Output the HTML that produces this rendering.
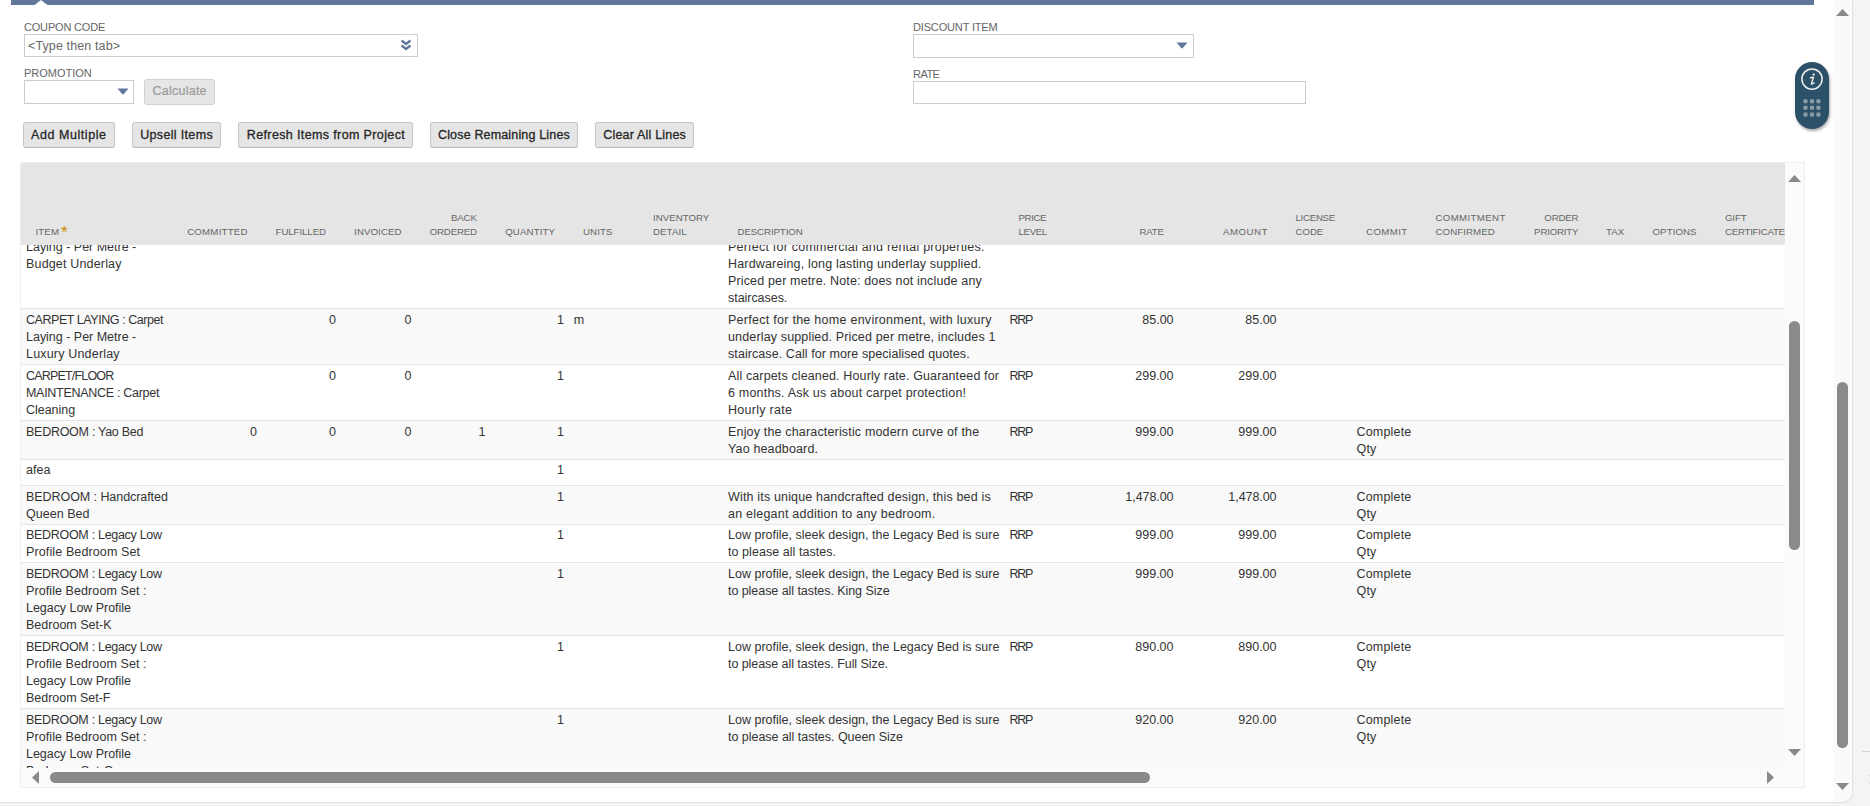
<!DOCTYPE html>
<html><head><meta charset='utf-8'><title>Items</title><style>
html,body{margin:0;padding:0}
body{width:1870px;height:806px;overflow:hidden;position:relative;background:#f4f4f4;font-family:"Liberation Sans",sans-serif}
.a{position:absolute}
.t{position:absolute;white-space:pre;font-size:12.5px;line-height:17px;color:#333}
</style></head><body>
<div class='a' style='left:-12px;top:-20px;width:1864px;height:822px;background:#fff;border-radius:0 0 10px 10px;box-shadow:0 0 0 1px #e2e2e2, 1px 1px 2px rgba(0,0,0,.06);'></div>
<div class='a' style='left:1862px;top:751px;width:8px;height:1px;background:#d4d4d4;'></div>
<div class='a' style='left:1869px;top:775px;width:1px;height:2px;background:#e2e2e2;'></div>
<div class='a' style='left:1869px;top:782px;width:1px;height:2px;background:#e2e2e2;'></div>
<div class='a' style='left:1833px;top:0px;width:19px;height:802px;background:#fafafa;border-bottom-right-radius:10px;'></div>
<svg class='a' style='left:1836px;top:9px' width='13' height='7'><polygon points='0,7 6.5,0 13,7' fill='#8a8a8a'/></svg>
<div class='a' style='left:1837px;top:382px;width:11px;height:366px;background:#8a8a8a;border-radius:5.5px;'></div>
<svg class='a' style='left:1836px;top:783px' width='13' height='7'><polygon points='0,0 13,0 6.5,7' fill='#8a8a8a'/></svg>
<svg class='a' style='left:11px;top:0' width='1803' height='5'><polygon points='0,0 1803,0 1803,5 36.5,5 30,0 23.5,5 0,5' fill='#607799'/></svg>
<div class='t' style='left:24px;top:20px;font-size:11px;line-height:14px;color:#666666;letter-spacing:-0.188px'>COUPON CODE</div>
<div class='a' style='left:24px;top:34px;width:394px;height:23px;border:1px solid #cccccc;box-sizing:border-box;background:#fff;'></div>
<div class='t' style='left:28px;top:38px;color:#666666;letter-spacing:0.12px'>&lt;Type then tab&gt;</div>
<svg class='a' style='left:400px;top:39px' width='12' height='13'><path d='M1.5 1.5 L6 5 L10.5 1.5' stroke='#607799' stroke-width='2.4' fill='none'/><path d='M1.5 6.5 L6 10 L10.5 6.5' stroke='#607799' stroke-width='2.4' fill='none'/></svg>
<div class='t' style='left:24px;top:66px;font-size:11px;line-height:14px;color:#666666;letter-spacing:-0.017px'>PROMOTION</div>
<div class='a' style='left:24px;top:80px;width:110px;height:24px;border:1px solid #cccccc;box-sizing:border-box;background:#fff;'></div>
<svg class='a' style='left:117px;top:88px' width='12' height='7'><path d='M0.5 0.5 L11.5 0.5 L6.8 6 Q6 6.8 5.2 6 Z' fill='#607799'/></svg>
<div class='a' style='left:144px;top:79px;width:71px;height:26px;border:1px solid #d0d0d0;box-sizing:border-box;background:#e6e6e6;border-radius:3px;'></div>
<div class='t' style='left:152.5px;top:83px;line-height:16px;color:#999999;letter-spacing:0.242px;-webkit-text-stroke:0.2px #9d9d9d'>Calculate</div>
<div class='t' style='left:913px;top:20px;font-size:11px;line-height:14px;color:#666666;letter-spacing:-0.156px'>DISCOUNT ITEM</div>
<div class='a' style='left:913px;top:34px;width:281px;height:24px;border:1px solid #cccccc;box-sizing:border-box;background:#fff;'></div>
<svg class='a' style='left:1176px;top:42px' width='12' height='7'><path d='M0.5 0.5 L11.5 0.5 L6.8 6 Q6 6.8 5.2 6 Z' fill='#607799'/></svg>
<div class='t' style='left:913px;top:67px;font-size:11px;line-height:14px;color:#666666;letter-spacing:-0.528px'>RATE</div>
<div class='a' style='left:913px;top:81px;width:393px;height:23px;border:1px solid #cccccc;box-sizing:border-box;background:#fff;'></div>
<div class='a' style='left:23px;top:122px;width:92px;height:26px;border:1px solid #c4c4c4;border-bottom-color:#b8b8b8;box-sizing:border-box;background:#e5e5e5;border-radius:3px;'></div>
<div class='t' style='left:31.0px;top:127px;line-height:16px;color:#262626;letter-spacing:0.567px;-webkit-text-stroke:0.3px #262626'>Add Multiple</div>
<div class='a' style='left:132px;top:122px;width:89px;height:26px;border:1px solid #c4c4c4;border-bottom-color:#b8b8b8;box-sizing:border-box;background:#e5e5e5;border-radius:3px;'></div>
<div class='t' style='left:140.2px;top:127px;line-height:16px;color:#262626;letter-spacing:0.335px;-webkit-text-stroke:0.3px #262626'>Upsell Items</div>
<div class='a' style='left:238px;top:122px;width:175px;height:26px;border:1px solid #c4c4c4;border-bottom-color:#b8b8b8;box-sizing:border-box;background:#e5e5e5;border-radius:3px;'></div>
<div class='t' style='left:246.8px;top:127px;line-height:16px;color:#262626;letter-spacing:0.371px;-webkit-text-stroke:0.3px #262626'>Refresh Items from Project</div>
<div class='a' style='left:430px;top:122px;width:148px;height:26px;border:1px solid #c4c4c4;border-bottom-color:#b8b8b8;box-sizing:border-box;background:#e5e5e5;border-radius:3px;'></div>
<div class='t' style='left:438.0px;top:127px;line-height:16px;color:#262626;letter-spacing:0.16px;-webkit-text-stroke:0.3px #262626'>Close Remaining Lines</div>
<div class='a' style='left:595px;top:122px;width:99px;height:26px;border:1px solid #c4c4c4;border-bottom-color:#b8b8b8;box-sizing:border-box;background:#e5e5e5;border-radius:3px;'></div>
<div class='t' style='left:603.3px;top:127px;line-height:16px;color:#262626;letter-spacing:0.186px;-webkit-text-stroke:0.3px #262626'>Clear All Lines</div>
<div class='a' style='left:20px;top:162px;width:1785px;height:626px;border:1px solid #eceef1;box-sizing:border-box;background:#fbfbfb;'></div>
<div class='a' style='left:21px;top:163px;width:1764px;height:82px;background:#e5e5e5;'></div>
<div class='t' style='left:35.5px;top:225px;font-size:9.7px;line-height:14px;color:#666666;letter-spacing:0.11px'>ITEM</div>
<div class='t' style='left:61px;top:223.5px;font-size:17px;line-height:17px;color:#c98c00;font-weight:normal'>*</div>
<div class='t' style='right:1622.29px;text-align:right;top:225px;font-size:9.7px;line-height:14px;color:#666666;letter-spacing:0.215px'>COMMITTED</div>
<div class='t' style='right:1544.09px;text-align:right;top:225px;font-size:9.7px;line-height:14px;color:#666666;letter-spacing:-0.086px'>FULFILLED</div>
<div class='t' style='right:1468.42px;text-align:right;top:225px;font-size:9.7px;line-height:14px;color:#666666;letter-spacing:0.08px'>INVOICED</div>
<div class='t' style='right:1393.1px;text-align:right;top:211px;font-size:9.7px;line-height:14px;color:#666666;letter-spacing:-0.095px'>BACK</div>
<div class='t' style='right:1393.17px;text-align:right;top:225px;font-size:9.7px;line-height:14px;color:#666666;letter-spacing:-0.175px'>ORDERED</div>
<div class='t' style='right:1314.88px;text-align:right;top:225px;font-size:9.7px;line-height:14px;color:#666666;letter-spacing:0.122px'>QUANTITY</div>
<div class='t' style='left:583px;top:225px;font-size:9.7px;line-height:14px;color:#666666;letter-spacing:0.082px'>UNITS</div>
<div class='t' style='left:653px;top:211px;font-size:9.7px;line-height:14px;color:#666666;letter-spacing:0.008px'>INVENTORY</div>
<div class='t' style='left:653px;top:225px;font-size:9.7px;line-height:14px;color:#666666;letter-spacing:0.075px'>DETAIL</div>
<div class='t' style='left:737.5px;top:225px;font-size:9.7px;line-height:14px;color:#666666;letter-spacing:-0.105px'>DESCRIPTION</div>
<div class='t' style='left:1018.5px;top:211px;font-size:9.7px;line-height:14px;color:#666666;letter-spacing:-0.389px'>PRICE</div>
<div class='t' style='left:1018.5px;top:225px;font-size:9.7px;line-height:14px;color:#666666;letter-spacing:-0.36px'>LEVEL</div>
<div class='t' style='right:706.21px;text-align:right;top:225px;font-size:9.7px;line-height:14px;color:#666666;letter-spacing:-0.207px'>RATE</div>
<div class='t' style='right:602.02px;text-align:right;top:225px;font-size:9.7px;line-height:14px;color:#666666;letter-spacing:0.484px'>AMOUNT</div>
<div class='t' style='left:1295.5px;top:211px;font-size:9.7px;line-height:14px;color:#666666;letter-spacing:-0.283px'>LICENSE</div>
<div class='t' style='left:1295.5px;top:225px;font-size:9.7px;line-height:14px;color:#666666;letter-spacing:-0.061px'>CODE</div>
<div class='t' style='left:1366px;top:225px;font-size:9.7px;line-height:14px;color:#666666;letter-spacing:0.399px'>COMMIT</div>
<div class='t' style='left:1435.5px;top:211px;font-size:9.7px;line-height:14px;color:#666666;letter-spacing:0.341px'>COMMITMENT</div>
<div class='t' style='left:1435.5px;top:225px;font-size:9.7px;line-height:14px;color:#666666;letter-spacing:0.078px'>CONFIRMED</div>
<div class='t' style='right:291.7px;text-align:right;top:211px;font-size:9.7px;line-height:14px;color:#666666;letter-spacing:-0.201px'>ORDER</div>
<div class='t' style='right:291.69px;text-align:right;top:225px;font-size:9.7px;line-height:14px;color:#666666;letter-spacing:-0.195px'>PRIORITY</div>
<div class='t' style='left:1606px;top:225px;font-size:9.7px;line-height:14px;color:#666666;letter-spacing:0.061px'>TAX</div>
<div class='t' style='left:1652.5px;top:225px;font-size:9.7px;line-height:14px;color:#666666;letter-spacing:0.073px'>OPTIONS</div>
<div class='t' style='left:1725px;top:211px;font-size:9.7px;line-height:14px;color:#666666;letter-spacing:-0.173px'>GIFT</div>
<div class='t' style='left:1725px;top:225px;font-size:9.7px;line-height:14px;color:#666666;letter-spacing:-0.26px'>CERTIFICATE</div>
<div class='a' style='left:21px;top:245px;width:1764px;height:523px;overflow:hidden'>
<div class='a' style='left:0;top:-26px;width:1764px;height:89px;background:#ffffff'></div>
<div class='a' style='left:0;top:63px;width:1764px;height:1px;background:#e6e6e6'></div>
<div class='t' style='left:5px;top:-23.5px;letter-spacing:-0.442px'>CARPET LAYING : Carpet</div>
<div class='t' style='left:5px;top:-6.5px;letter-spacing:-0.014px'>Laying - Per Metre -</div>
<div class='t' style='left:5px;top:10.5px;letter-spacing:0.169px'>Budget Underlay</div>
<div class='t' style='right:1449.0px;text-align:right;top:-23.5px'>0</div>
<div class='t' style='right:1373.5px;text-align:right;top:-23.5px'>0</div>
<div class='t' style='right:1221.0px;text-align:right;top:-23.5px'>1</div>
<div class='t' style='left:552.8px;top:-23.5px'>m</div>
<div class='t' style='left:707px;top:-23.5px;letter-spacing:0.171px'>Budget carpet laying per metre.</div>
<div class='t' style='left:707px;top:-6.5px;letter-spacing:0.224px'>Perfect for commercial and rental properties.</div>
<div class='t' style='left:707px;top:10.5px;letter-spacing:0.169px'>Hardwareing, long lasting underlay supplied.</div>
<div class='t' style='left:707px;top:27.5px;letter-spacing:0.149px'>Priced per metre. Note: does not include any</div>
<div class='t' style='left:707px;top:44.5px;letter-spacing:-0.041px'>staircases.</div>
<div class='t' style='left:988.5px;top:-23.5px;letter-spacing:-1.326px'>RRP</div>
<div class='t' style='right:611.53px;text-align:right;top:-23.5px;letter-spacing:-0.026px'>45.00</div>
<div class='t' style='right:508.53px;text-align:right;top:-23.5px;letter-spacing:-0.026px'>45.00</div>
<div class='a' style='left:0;top:64px;width:1764px;height:55px;background:#f9f9f9'></div>
<div class='a' style='left:0;top:119px;width:1764px;height:1px;background:#e6e6e6'></div>
<div class='t' style='left:5px;top:66.5px;letter-spacing:-0.442px'>CARPET LAYING : Carpet</div>
<div class='t' style='left:5px;top:83.5px;letter-spacing:-0.014px'>Laying - Per Metre -</div>
<div class='t' style='left:5px;top:100.5px;letter-spacing:0.183px'>Luxury Underlay</div>
<div class='t' style='right:1449.0px;text-align:right;top:66.5px'>0</div>
<div class='t' style='right:1373.5px;text-align:right;top:66.5px'>0</div>
<div class='t' style='right:1221.0px;text-align:right;top:66.5px'>1</div>
<div class='t' style='left:552.8px;top:66.5px'>m</div>
<div class='t' style='left:707px;top:66.5px;letter-spacing:0.271px'>Perfect for the home environment, with luxury</div>
<div class='t' style='left:707px;top:83.5px;letter-spacing:0.148px'>underlay supplied. Priced per metre, includes 1</div>
<div class='t' style='left:707px;top:100.5px;letter-spacing:0.077px'>staircase. Call for more specialised quotes.</div>
<div class='t' style='left:988.5px;top:66.5px;letter-spacing:-1.326px'>RRP</div>
<div class='t' style='right:611.53px;text-align:right;top:66.5px;letter-spacing:-0.026px'>85.00</div>
<div class='t' style='right:508.53px;text-align:right;top:66.5px;letter-spacing:-0.026px'>85.00</div>
<div class='a' style='left:0;top:120px;width:1764px;height:55px;background:#ffffff'></div>
<div class='a' style='left:0;top:175px;width:1764px;height:1px;background:#e6e6e6'></div>
<div class='t' style='left:5px;top:122.5px;letter-spacing:-0.815px'>CARPET/FLOOR</div>
<div class='t' style='left:5px;top:139.5px;letter-spacing:-0.29px'>MAINTENANCE : Carpet</div>
<div class='t' style='left:5px;top:156.5px;letter-spacing:-0.023px'>Cleaning</div>
<div class='t' style='right:1449.0px;text-align:right;top:122.5px'>0</div>
<div class='t' style='right:1373.5px;text-align:right;top:122.5px'>0</div>
<div class='t' style='right:1221.0px;text-align:right;top:122.5px'>1</div>
<div class='t' style='left:707px;top:122.5px;letter-spacing:0.132px'>All carpets cleaned. Hourly rate. Guaranteed for</div>
<div class='t' style='left:707px;top:139.5px;letter-spacing:0.201px'>6 months. Ask us about carpet protection!</div>
<div class='t' style='left:707px;top:156.5px;letter-spacing:0.272px'>Hourly rate</div>
<div class='t' style='left:988.5px;top:122.5px;letter-spacing:-1.326px'>RRP</div>
<div class='t' style='right:611.52px;text-align:right;top:122.5px;letter-spacing:-0.018px'>299.00</div>
<div class='t' style='right:508.52px;text-align:right;top:122.5px;letter-spacing:-0.018px'>299.00</div>
<div class='a' style='left:0;top:176px;width:1764px;height:38px;background:#f9f9f9'></div>
<div class='a' style='left:0;top:214px;width:1764px;height:1px;background:#e6e6e6'></div>
<div class='t' style='left:5px;top:178.5px;letter-spacing:-0.273px'>BEDROOM : Yao Bed</div>
<div class='t' style='right:1528.0px;text-align:right;top:178.5px'>0</div>
<div class='t' style='right:1449.0px;text-align:right;top:178.5px'>0</div>
<div class='t' style='right:1373.5px;text-align:right;top:178.5px'>0</div>
<div class='t' style='right:1299.5px;text-align:right;top:178.5px'>1</div>
<div class='t' style='right:1221.0px;text-align:right;top:178.5px'>1</div>
<div class='t' style='left:707px;top:178.5px;letter-spacing:0.168px'>Enjoy the characteristic modern curve of the</div>
<div class='t' style='left:707px;top:195.5px;letter-spacing:0.15px'>Yao headboard.</div>
<div class='t' style='left:988.5px;top:178.5px;letter-spacing:-1.326px'>RRP</div>
<div class='t' style='right:611.52px;text-align:right;top:178.5px;letter-spacing:-0.018px'>999.00</div>
<div class='t' style='right:508.52px;text-align:right;top:178.5px;letter-spacing:-0.018px'>999.00</div>
<div class='t' style='left:1335.5px;top:178.5px;letter-spacing:0.184px'>Complete</div>
<div class='t' style='left:1335.5px;top:195.5px;letter-spacing:0.16px'>Qty</div>
<div class='a' style='left:0;top:215px;width:1764px;height:25px;background:#ffffff'></div>
<div class='a' style='left:0;top:240px;width:1764px;height:1px;background:#e6e6e6'></div>
<div class='t' style='left:5px;top:216.5px;letter-spacing:0.051px'>afea</div>
<div class='t' style='right:1221.0px;text-align:right;top:216.5px'>1</div>
<div class='a' style='left:0;top:241px;width:1764px;height:38px;background:#f9f9f9'></div>
<div class='a' style='left:0;top:279px;width:1764px;height:1px;background:#e6e6e6'></div>
<div class='t' style='left:5px;top:243.5px;letter-spacing:-0.062px'>BEDROOM : Handcrafted</div>
<div class='t' style='left:5px;top:260.5px;letter-spacing:0.035px'>Queen Bed</div>
<div class='t' style='right:1221.0px;text-align:right;top:243.5px'>1</div>
<div class='t' style='left:707px;top:243.5px;letter-spacing:0.166px'>With its unique handcrafted design, this bed is</div>
<div class='t' style='left:707px;top:260.5px;letter-spacing:0.227px'>an elegant addition to any bedroom.</div>
<div class='t' style='left:988.5px;top:243.5px;letter-spacing:-1.326px'>RRP</div>
<div class='t' style='right:611.57px;text-align:right;top:243.5px;letter-spacing:-0.073px'>1,478.00</div>
<div class='t' style='right:508.57px;text-align:right;top:243.5px;letter-spacing:-0.073px'>1,478.00</div>
<div class='t' style='left:1335.5px;top:243.5px;letter-spacing:0.184px'>Complete</div>
<div class='t' style='left:1335.5px;top:260.5px;letter-spacing:0.16px'>Qty</div>
<div class='a' style='left:0;top:280px;width:1764px;height:37px;background:#ffffff'></div>
<div class='a' style='left:0;top:317px;width:1764px;height:1px;background:#e6e6e6'></div>
<div class='t' style='left:5px;top:281.5px;letter-spacing:-0.303px'>BEDROOM : Legacy Low</div>
<div class='t' style='left:5px;top:298.5px;letter-spacing:0.123px'>Profile Bedroom Set</div>
<div class='t' style='right:1221.0px;text-align:right;top:281.5px'>1</div>
<div class='t' style='left:707px;top:281.5px;letter-spacing:0.008px'>Low profile, sleek design, the Legacy Bed is sure</div>
<div class='t' style='left:707px;top:298.5px;letter-spacing:0.053px'>to please all tastes.</div>
<div class='t' style='left:988.5px;top:281.5px;letter-spacing:-1.326px'>RRP</div>
<div class='t' style='right:611.52px;text-align:right;top:281.5px;letter-spacing:-0.018px'>999.00</div>
<div class='t' style='right:508.52px;text-align:right;top:281.5px;letter-spacing:-0.018px'>999.00</div>
<div class='t' style='left:1335.5px;top:281.5px;letter-spacing:0.184px'>Complete</div>
<div class='t' style='left:1335.5px;top:298.5px;letter-spacing:0.16px'>Qty</div>
<div class='a' style='left:0;top:318px;width:1764px;height:72px;background:#f9f9f9'></div>
<div class='a' style='left:0;top:390px;width:1764px;height:1px;background:#e6e6e6'></div>
<div class='t' style='left:5px;top:320.5px;letter-spacing:-0.303px'>BEDROOM : Legacy Low</div>
<div class='t' style='left:5px;top:337.5px;letter-spacing:0.086px'>Profile Bedroom Set :</div>
<div class='t' style='left:5px;top:354.5px;letter-spacing:-0.037px'>Legacy Low Profile</div>
<div class='t' style='left:5px;top:371.5px;letter-spacing:0.01px'>Bedroom Set-K</div>
<div class='t' style='right:1221.0px;text-align:right;top:320.5px'>1</div>
<div class='t' style='left:707px;top:320.5px;letter-spacing:0.008px'>Low profile, sleek design, the Legacy Bed is sure</div>
<div class='t' style='left:707px;top:337.5px;letter-spacing:-0.057px'>to please all tastes. King Size</div>
<div class='t' style='left:988.5px;top:320.5px;letter-spacing:-1.326px'>RRP</div>
<div class='t' style='right:611.52px;text-align:right;top:320.5px;letter-spacing:-0.018px'>999.00</div>
<div class='t' style='right:508.52px;text-align:right;top:320.5px;letter-spacing:-0.018px'>999.00</div>
<div class='t' style='left:1335.5px;top:320.5px;letter-spacing:0.184px'>Complete</div>
<div class='t' style='left:1335.5px;top:337.5px;letter-spacing:0.16px'>Qty</div>
<div class='a' style='left:0;top:391px;width:1764px;height:72px;background:#ffffff'></div>
<div class='a' style='left:0;top:463px;width:1764px;height:1px;background:#e6e6e6'></div>
<div class='t' style='left:5px;top:393.5px;letter-spacing:-0.303px'>BEDROOM : Legacy Low</div>
<div class='t' style='left:5px;top:410.5px;letter-spacing:0.086px'>Profile Bedroom Set :</div>
<div class='t' style='left:5px;top:427.5px;letter-spacing:-0.037px'>Legacy Low Profile</div>
<div class='t' style='left:5px;top:444.5px;letter-spacing:-0.027px'>Bedroom Set-F</div>
<div class='t' style='right:1221.0px;text-align:right;top:393.5px'>1</div>
<div class='t' style='left:707px;top:393.5px;letter-spacing:0.008px'>Low profile, sleek design, the Legacy Bed is sure</div>
<div class='t' style='left:707px;top:410.5px;letter-spacing:-0.059px'>to please all tastes. Full Size.</div>
<div class='t' style='left:988.5px;top:393.5px;letter-spacing:-1.326px'>RRP</div>
<div class='t' style='right:611.52px;text-align:right;top:393.5px;letter-spacing:-0.018px'>890.00</div>
<div class='t' style='right:508.52px;text-align:right;top:393.5px;letter-spacing:-0.018px'>890.00</div>
<div class='t' style='left:1335.5px;top:393.5px;letter-spacing:0.184px'>Complete</div>
<div class='t' style='left:1335.5px;top:410.5px;letter-spacing:0.16px'>Qty</div>
<div class='a' style='left:0;top:464px;width:1764px;height:81px;background:#f9f9f9'></div>
<div class='t' style='left:5px;top:466.5px;letter-spacing:-0.303px'>BEDROOM : Legacy Low</div>
<div class='t' style='left:5px;top:483.5px;letter-spacing:0.086px'>Profile Bedroom Set :</div>
<div class='t' style='left:5px;top:500.5px;letter-spacing:-0.037px'>Legacy Low Profile</div>
<div class='t' style='left:5px;top:517.5px;letter-spacing:0.059px'>Bedroom Set-Q</div>
<div class='t' style='right:1221.0px;text-align:right;top:466.5px'>1</div>
<div class='t' style='left:707px;top:466.5px;letter-spacing:0.008px'>Low profile, sleek design, the Legacy Bed is sure</div>
<div class='t' style='left:707px;top:483.5px;letter-spacing:-0.027px'>to please all tastes. Queen Size</div>
<div class='t' style='left:988.5px;top:466.5px;letter-spacing:-1.326px'>RRP</div>
<div class='t' style='right:611.52px;text-align:right;top:466.5px;letter-spacing:-0.018px'>920.00</div>
<div class='t' style='right:508.52px;text-align:right;top:466.5px;letter-spacing:-0.018px'>920.00</div>
<div class='t' style='left:1335.5px;top:466.5px;letter-spacing:0.184px'>Complete</div>
<div class='t' style='left:1335.5px;top:483.5px;letter-spacing:0.16px'>Qty</div>
</div>
<div class='a' style='left:1785px;top:163px;width:19px;height:605px;background:#fbfbfb;'></div>
<svg class='a' style='left:1788px;top:175px' width='13' height='7'><polygon points='0,7 6.5,0 13,7' fill='#8a8a8a'/></svg>
<div class='a' style='left:1789px;top:321px;width:11px;height:229px;background:#8a8a8a;border-radius:5.5px;'></div>
<svg class='a' style='left:1788px;top:749px' width='13' height='7'><polygon points='0,0 13,0 6.5,7' fill='#8a8a8a'/></svg>
<div class='a' style='left:21px;top:768px;width:1783px;height:19px;background:#fbfbfb;'></div>
<svg class='a' style='left:32px;top:771px' width='7' height='13'><polygon points='7,0 7,13 0,6.5' fill='#8a8a8a'/></svg>
<div class='a' style='left:50px;top:772px;width:1100px;height:11px;background:#8a8a8a;border-radius:5.5px;'></div>
<svg class='a' style='left:1767px;top:771px' width='7' height='13'><polygon points='0,0 7,6.5 0,13' fill='#8a8a8a'/></svg>
<div class='a' style='left:1795px;top:62px;width:34px;height:67px;border-radius:17px;background:#2c5067;box-shadow:1px 2px 3px rgba(0,0,0,.35)'></div>
<svg class='a' style='left:1795px;top:62px' width='34' height='67'>
<circle cx='17' cy='17.05' r='10.1' stroke='#eef0f2' stroke-width='1.55' fill='none'/>
<path d='M15.3 16.0 Q16.8 15.2 18.5 15.3 L16.4 21.5 Q16.2 22.5 17.3 22.0 L19.1 20.8' stroke='#eef0f2' stroke-width='1.35' fill='none' stroke-linecap='round' stroke-linejoin='round'/>
<ellipse cx='18.7' cy='12.5' rx='1.3' ry='1.05' fill='#eef0f2'/>
<g fill='#879ca8'>
<circle cx='10.5' cy='39.2' r='2.3'/><circle cx='17' cy='39.2' r='2.3'/><circle cx='23.4' cy='39.2' r='2.3'/>
<circle cx='10.5' cy='45.7' r='2.3'/><circle cx='17' cy='45.7' r='2.3'/><circle cx='23.4' cy='45.7' r='2.3'/>
<circle cx='10.5' cy='52.6' r='2.3'/><circle cx='17' cy='52.6' r='2.3'/><circle cx='23.4' cy='52.6' r='2.3'/>
</g></svg>
</body></html>
